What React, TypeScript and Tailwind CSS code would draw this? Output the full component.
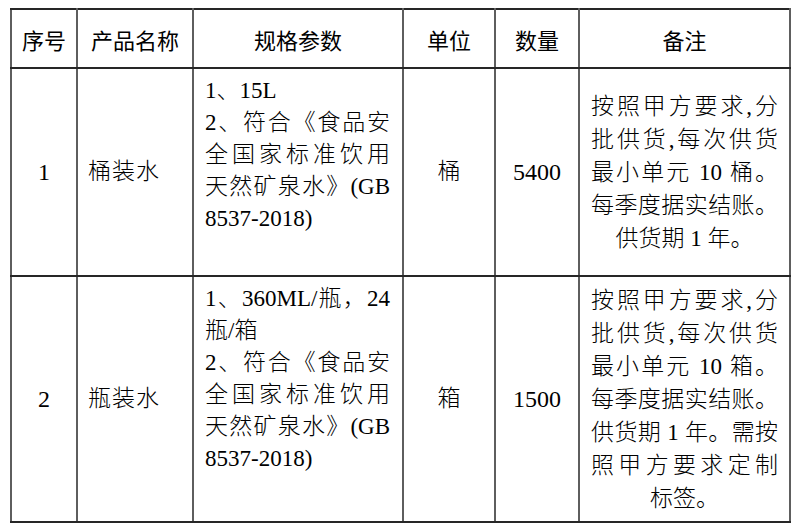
import clsx from "clsx";

interface Line {
	text: string;
	justify?: boolean;
}

interface ProductRow {
	index: string;
	name: string;
	spec: Line[];
	unit: string;
	quantity: string;
	remark: Line[];
}

const headers = ["序号", "产品名称", "规格参数", "单位", "数量", "备注"];

const rows: ProductRow[] = [
	{
		index: "1",
		name: "桶装水",
		spec: [
			{ text: "1、15L" },
			{ text: "2、符合《食品安", justify: true },
			{ text: "全国家标准饮用", justify: true },
			{ text: "天然矿泉水》(GB", justify: true },
			{ text: "8537-2018)" },
		],
		unit: "桶",
		quantity: "5400",
		remark: [
			{ text: "按照甲方要求,分", justify: true },
			{ text: "批供货,每次供货", justify: true },
			{ text: "最小单元 10 桶。", justify: true },
			{ text: "每季度据实结账。", justify: true },
			{ text: "供货期 1 年。" },
		],
	},
	{
		index: "2",
		name: "瓶装水",
		spec: [
			{ text: "1、360ML/瓶，24", justify: true },
			{ text: "瓶/箱" },
			{ text: "2、符合《食品安", justify: true },
			{ text: "全国家标准饮用", justify: true },
			{ text: "天然矿泉水》(GB", justify: true },
			{ text: "8537-2018)" },
		],
		unit: "箱",
		quantity: "1500",
		remark: [
			{ text: "按照甲方要求,分", justify: true },
			{ text: "批供货,每次供货", justify: true },
			{ text: "最小单元 10 箱。", justify: true },
			{ text: "每季度据实结账。", justify: true },
			{ text: "供货期 1 年。需按", justify: true },
			{ text: "照甲方要求定制", justify: true },
			{ text: "标签。" },
		],
	},
];

const rowHeights = ["h-[208px]", "h-[246px]"];

const cellBorder = "border-x-2 border-y-2 border-x-[#5e5e5e] border-y-[#262626]";

function TextLines({ lines, center }: { lines: Line[]; center?: boolean }) {
	return (
		<div>
			{lines.map((line, i) => (
				<div
					key={i}
					className={clsx(
						"whitespace-nowrap",
						line.justify
							? "text-justify [text-align-last:justify]"
							: center
								? "text-center"
								: "text-left",
					)}
				>
					{line.text}
				</div>
			))}
		</div>
	);
}

export default function App() {
	return (
		<div className="min-h-[532px] w-[800px] bg-white pl-[10px] pt-[8px] text-black">
			<table className="w-[781px] table-fixed border-collapse border-2 border-[#333]">
				<colgroup>
					<col className="w-[66px]" />
					<col className="w-[116px]" />
					<col className="w-[210px]" />
					<col className="w-[92px]" />
					<col className="w-[84px]" />
					<col className="w-[211px]" />
				</colgroup>
				<thead>
					<tr className="h-[59px]">
						{headers.map((header) => (
							<th
								key={header}
								className={clsx(
									cellBorder,
									"p-0 text-center align-middle font-['Noto_Sans_CJK_SC',sans-serif] text-[22px] font-normal leading-none",
								)}
							>
								{header}
							</th>
						))}
					</tr>
				</thead>
				<tbody className="font-['Liberation_Serif','Noto_Sans_CJK_SC',serif] text-[23px] font-light">
					{rows.map((row, rowIndex) => (
						<tr key={row.index} className={rowHeights[rowIndex]}>
							<td
								className={clsx(
									cellBorder,
									"p-0 text-center align-middle text-[24px]",
								)}
							>
								{row.index}
							</td>
							<td
								className={clsx(
									cellBorder,
									"pl-[10px] align-middle tracking-[1px]",
								)}
							>
								{row.name}
							</td>
							<td
								className={clsx(
									cellBorder,
									"pl-[11px] pr-[12px] pt-[6px] align-top leading-[32px]",
								)}
							>
								<TextLines lines={row.spec} />
							</td>
							<td className={clsx(cellBorder, "p-0 text-center align-middle")}>
								{row.unit}
							</td>
							<td
								className={clsx(
									cellBorder,
									"p-0 text-center align-middle text-[24px]",
								)}
							>
								{row.quantity}
							</td>
							<td
								className={clsx(
									cellBorder,
									"px-[11px] align-middle leading-[33px]",
								)}
							>
								<TextLines lines={row.remark} center />
							</td>
						</tr>
					))}
				</tbody>
			</table>
		</div>
	);
}
